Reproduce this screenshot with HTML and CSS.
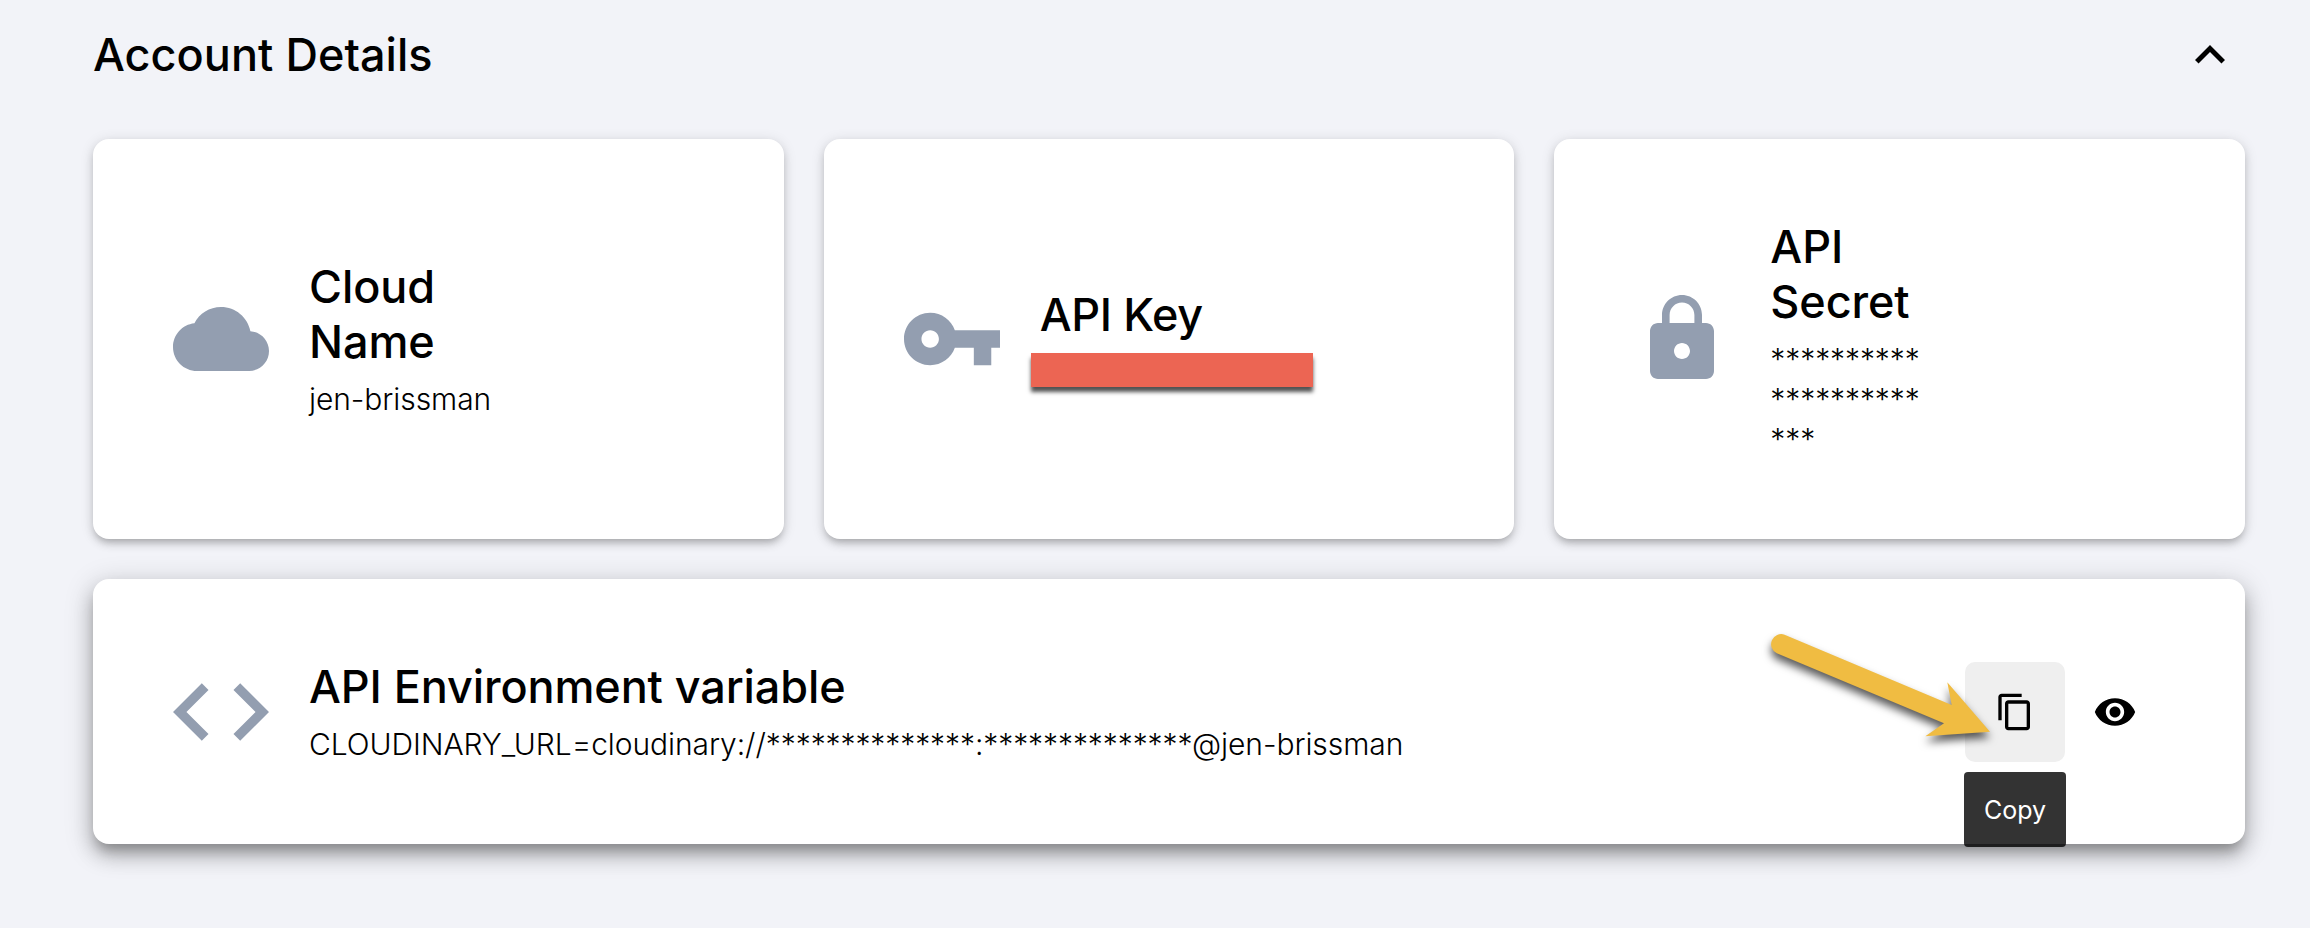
FILE: index.html
```
<!DOCTYPE html>
<html lang="en">
<head>
<meta charset="utf-8">
<title>Account Details</title>
<link rel="stylesheet" href="styles.css">
</head>
<body>
<main class="account">
  <header class="account-header">
    <h1 class="title heading">Account Details</h1>
    <svg class="chevron" viewBox="0 0 24 24"><path d="M12 8l-6 6 1.41 1.41L12 10.83l4.59 4.58L18 14z"/></svg>
  </header>
  <div class="cards">
    <section class="card">
      <svg class="icon" viewBox="0 0 24 24"><path d="M19.35 10.04C18.67 6.59 15.64 4 12 4 9.11 4 6.6 5.64 5.35 8.04 2.34 8.36 0 10.91 0 14c0 3.31 2.69 6 6 6h13c2.76 0 5-2.24 5-5 0-2.64-2.05-4.78-4.65-4.96z"/></svg>
      <div class="text narrow">
        <h2 class="title">Cloud Name</h2>
        <p class="value single">jen-brissman</p>
      </div>
    </section>
    <section class="card">
      <svg class="icon" viewBox="1 1 22 22"><path d="M12.65 10C11.83 7.67 9.61 6 7 6c-3.31 0-6 2.69-6 6s2.69 6 6 6c2.61 0 4.83-1.67 5.65-4H17v4h4v-4h2v-4H12.65zM7 14c-1.1 0-2-.9-2-2s.9-2 2-2 2 .9 2 2-.9 2-2 2z"/></svg>
      <div class="text">
        <h2 class="title tight">API Key</h2>
        <div class="value hidden-value"><div class="redaction"></div></div>
      </div>
    </section>
    <section class="card">
      <svg class="icon" viewBox="0 0 24 24"><path d="M18 8h-1V6c0-2.76-2.24-5-5-5S7 3.24 7 6v2H6c-1.1 0-2 .9-2 2v10c0 1.1.9 2 2 2h12c1.1 0 2-.9 2-2V10c0-1.1-.9-2-2-2zm-6 9c-1.1 0-2-.9-2-2s.9-2 2-2 2 .9 2 2-.9 2-2 2zm3.1-9H8.9V6c0-1.71 1.39-3.1 3.1-3.1 1.71 0 3.1 1.39 3.1 3.1v2z"/></svg>
      <div class="text narrow">
        <h2 class="title">API Secret</h2>
        <p class="value">***********************</p>
      </div>
    </section>
  </div>
  <section class="card raised">
    <svg class="icon" viewBox="2 2 20 20"><path d="M9.4 16.6L4.8 12l4.6-4.6L8 6l-6 6 6 6 1.4-1.4zm5.2 0l4.6-4.6-4.6-4.6L16 6l6 6-6 6-1.4-1.4z"/></svg>
    <div class="text grow">
      <h2 class="title">API Environment variable</h2>
      <p class="value single">CLOUDINARY_URL=cloudinary://**************:**************@jen-brissman</p>
    </div>
    <div class="actions">
      <button class="action active" aria-label="Copy">
        <svg class="copy-icon" viewBox="0 0 24 24"><path d="M16 1H4c-1.1 0-2 .9-2 2v14h2V3h12V1zm3 4H8c-1.1 0-2 .9-2 2v14c0 1.1.9 2 2 2h11c1.1 0 2-.9 2-2V7c0-1.1-.9-2-2-2zm0 16H8V7h11v14z"/></svg>
        <span class="tooltip">Copy</span>
      </button>
      <button class="action" aria-label="Show">
        <svg class="eye-icon" viewBox="0 0 24 24"><path d="M12 4.5C7 4.5 2.73 7.61 1 12c1.73 4.39 6 7.5 11 7.5s9.27-3.11 11-7.5c-1.73-4.39-6-7.5-11-7.5zM12 17c-2.76 0-5-2.24-5-5s2.24-5 5-5 5 2.24 5 5-2.24 5-5 5zm0-8c-1.66 0-3 1.34-3 3s1.34 3 3 3 3-1.34 3-3-1.34-3-3-3z"/></svg>
      </button>
      <svg class="arrow" viewBox="0 0 240 150"><path d="M14.6 34.7L181.7 105 177.3 82.3 220 131.7 155.3 136.3 174 123.3 6.8 53.3A10.1 10.1 0 0 1 14.6 34.7z"/></svg>
    </div>
  </section>
</main>
</body>
</html>
```
FILE: styles.css
```
* {
  box-sizing: border-box;
}

body {
  margin: 0;
  height: 928px;
  overflow: hidden;
  background: #f2f3f8;
  color: #000;
  font-family: Inter, "Liberation Sans", sans-serif;
}

.account {
  padding: 25px 65px 0 93px;
}

.account-header {
  display: flex;
  align-items: center;
  justify-content: space-between;
  height: 60px;
  margin-bottom: 54px;
  padding-right: 5px;
}

.title {
  margin: 0;
  font-size: 45px;
  font-weight: 500;
  line-height: 55px;
  letter-spacing: -0.1px;
}

.heading {
  padding-bottom: 1px;
  letter-spacing: 0.04px;
}

.tight {
  letter-spacing: -0.35px;
}

.chevron {
  width: 60px;
  height: 60px;
}

.cards {
  display: grid;
  grid-template-columns: repeat(3, 1fr);
  gap: 40px;
  height: 400px;
  margin-bottom: 40px;
}

.card {
  display: flex;
  align-items: center;
  gap: 40px;
  padding: 0 80px;
  border-radius: 16px;
  background: #fff;
  box-shadow: 0 6px 6px -4px rgba(0, 0, 0, 0.14), 0 5px 8px rgba(0, 0, 0, 0.13), 0 2px 14px rgba(0, 0, 0, 0.12);
}

.raised {
  position: relative;
  height: 265px;
  box-shadow: 0 10px 12px -4px rgba(0, 0, 0, 0.22), 0 12px 20px rgba(0, 0, 0, 0.18), 0 6px 28px 2px rgba(0, 0, 0, 0.18);
}

.icon {
  flex: none;
  width: 96px;
  height: 96px;
  fill: #939eb0;
}

.narrow {
  width: 155px;
}

.grow {
  flex: 1;
}

.value {
  margin: 10px 0 0;
  min-height: 40px;
  font-size: 30px;
  font-weight: 300;
  line-height: 40px;
  letter-spacing: -0.08px;
  overflow-wrap: anywhere;
}

.single {
  white-space: nowrap;
}

.hidden-value {
  padding-top: 1.5px;
}

.redaction {
  width: 282px;
  height: 34px;
  margin-left: -9px;
  background: #ec6553;
  box-shadow: 0 5px 4px rgba(0, 0, 0, 0.68);
}

.actions {
  position: relative;
  display: flex;
}

.action {
  position: relative;
  display: flex;
  align-items: center;
  justify-content: center;
  width: 100px;
  height: 100px;
  padding: 0;
  border: 0;
  border-radius: 10px;
  background: none;
  font-family: inherit;
}

.active {
  background: #efefef;
}

.copy-icon {
  width: 40px;
  height: 40px;
}

.eye-icon {
  width: 44px;
  height: 44px;
}

.tooltip {
  position: absolute;
  top: 110px;
  left: -1px;
  width: 102px;
  height: 75px;
  border-radius: 4px;
  background: rgba(0, 0, 0, 0.8);
  color: #fff;
  font-size: 25px;
  font-weight: 400;
  line-height: 76px;
  text-align: center;
}

.arrow {
  position: absolute;
  top: -62px;
  left: -195px;
  width: 240px;
  height: 150px;
  overflow: visible;
  fill: #f0bc42;
  filter: drop-shadow(0 6px 4px rgba(0, 0, 0, 0.65));
}
```
